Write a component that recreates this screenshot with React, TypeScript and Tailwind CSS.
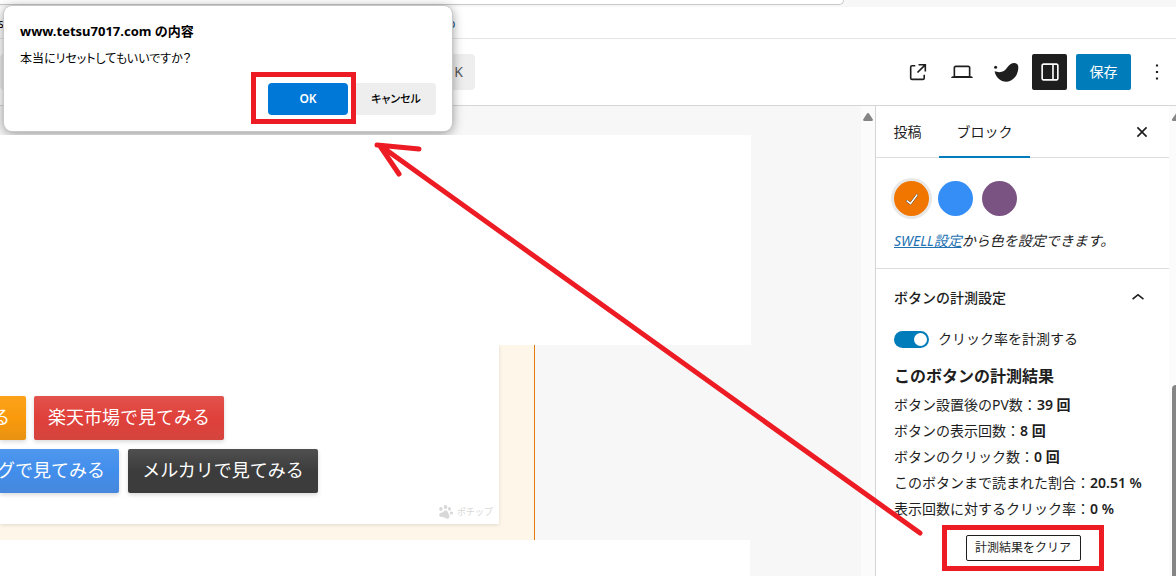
import React from "react";
import clsx from "clsx";

const stats = [
  { label: "ボタン設置後のPV数：", value: "39 回" },
  { label: "ボタンの表示回数：", value: "8 回" },
  { label: "ボタンのクリック数：", value: "0 回" },
  { label: "このボタンまで読まれた割合：", value: "20.51 %" },
  { label: "表示回数に対するクリック率：", value: "0 %" },
];

const colors = [
  { name: "オレンジ", className: "bg-[#f07600]", selected: true },
  { name: "ブルー", className: "bg-[#358ef5]", selected: false },
  { name: "パープル", className: "bg-[#7b5383]", selected: false },
];

function Icon({ d, className = "w-[26px] h-[26px]" }: { d: string; className?: string }) {
  return (
    <svg xmlns="http://www.w3.org/2000/svg" viewBox="0 0 24 24" fill="currentColor" className={className}>
      <path d={d} />
    </svg>
  );
}

function ShopButton({ children, className }: { children: React.ReactNode; className: string }) {
  return (
    <a
      href="#"
      className={clsx(
        "flex h-11 shrink-0 items-center whitespace-nowrap bg-linear-to-b pb-1 text-lg leading-6 text-white shadow-[0_2px_4px_rgba(0,0,0,0.15)]",
        className
      )}
    >
      {children}
    </a>
  );
}

function Header() {
  return (
    <header className="flex h-[67px] shrink-0 items-center justify-between border-b border-[#d5d5d5] bg-white pr-0.5">
      <button className="flex h-9 w-[475px] items-center justify-end rounded-sm bg-[#eeeeee] pr-3 text-sm text-[#555]">
        K
      </button>
      <div className="flex items-center gap-[9px] text-[#1e1e1e]">
        <button aria-label="投稿を表示" className="flex h-9 w-[35px] items-center justify-center">
          <Icon d="M19.5 4.5h-7V6h4.44l-5.97 5.97 1.06 1.06L18 7.06v4.44h1.5v-7Zm-13 1a2 2 0 0 0-2 2v10a2 2 0 0 0 2 2h10a2 2 0 0 0 2-2v-3H17v3a.5.5 0 0 1-.5.5h-10a.5.5 0 0 1-.5-.5v-10a.5.5 0 0 1 .5-.5h3V5.5h-3Z" />
        </button>
        <button aria-label="表示" className="flex h-9 w-[35px] items-center justify-center">
          <Icon d="M20.5 16h-.7V8c0-1.1-.9-2-2-2H6.2c-1.1 0-2 .9-2 2v8h-.7c-.8 0-1.5.7-1.5 1.5h20c0-.8-.7-1.5-1.5-1.5zM5.7 8c0-.3.2-.5.5-.5h11.6c.3 0 .5.2.5.5v7.6H5.7V8z" />
        </button>
        <button aria-label="SWELL" className="flex h-9 w-[35px] items-center justify-center">
          <svg viewBox="0 0 26 20" fill="currentColor" className="h-5 w-[26px]">
            <circle cx="2.6" cy="5.3" r="1.5" />
            <path d="M1.600 9.300c1.600.1 2.800 1 4.800 1 3.400 0 5.800-1.900 7.800-4.700C16.200 2.800 18.200.9 21.400.9c2.500 0 3.900 1.800 3.900 4.700 0 4-1.500 7.600-4.100 10.400-2.300 2.400-5 3.700-8 3.700C7.600 19.700 2.700 15.500 1.600 9.300z" />
          </svg>
        </button>
        <button aria-label="設定" className="flex h-9 w-[35px] items-center justify-center rounded-xs bg-[#1e1e1e] text-white">
          <Icon d="M18 4H6c-1.1 0-2 .9-2 2v12c0 1.1.9 2 2 2h12c1.1 0 2-.9 2-2V6c0-1.1-.9-2-2-2zm-4 14.5H6c-.3 0-.5-.2-.5-.5V6c0-.3.2-.5.5-.5h8v13zm4.5-.5c0 .3-.2.5-.5.5h-2.5v-13H18c.3 0 .5.2.5.5v12z" />
        </button>
        <button className="flex h-9 w-[55px] items-center justify-center rounded-xs bg-[#007cba] text-sm text-white">
          保存
        </button>
        <button aria-label="オプション" className="flex h-9 w-[34px] items-center justify-center">
          <Icon d="M13 19h-2v-2h2v2zm0-6h-2v-2h2v2zm0-6h-2V5h2v2z" />
        </button>
      </div>
    </header>
  );
}

function Canvas() {
  return (
    <main className="flex min-w-0 flex-1 flex-col overflow-hidden bg-[#f7f7f7] pt-[29px] [font-family:'Noto_Sans_CJK_JP',sans-serif]">
      <div className="relative z-20 mr-[110px] h-[210px] shrink-0 bg-white" />
      <div className="mr-[326px] h-[195px] shrink-0 border-r border-r-[#e57a10] bg-[#fff6ea] pr-[35px]">
        <div className="flex h-[179px] flex-col bg-white pt-[51px] shadow-[0_1px_4px_rgba(0,0,0,0.12)]">
          <div className="flex gap-2">
            <ShopButton className="w-[26px] justify-end rounded-r-xs from-[#fba21a] via-[#fa9a0b] to-[#e89212] pr-4">
              る
            </ShopButton>
            <ShopButton className="w-[190px] justify-center rounded-xs from-[#e2524c] via-[#e0403a] to-[#d5443e]">
              楽天市場で見てみる
            </ShopButton>
          </div>
          <div className="mt-[9px] flex gap-[9px]">
            <ShopButton className="w-[119px] justify-end rounded-r-xs from-[#4f98ee] via-[#428eec] to-[#4688dc] pr-3.5">
              グで見てみる
            </ShopButton>
            <ShopButton className="w-[190px] justify-center rounded-xs from-[#505050] via-[#3c3c3c] to-[#3c3c3c]">
              メルカリで見てみる
            </ShopButton>
          </div>
          <div className="mt-[11px] flex items-center justify-end gap-1 pr-1.5 text-[#d8d8d8]">
            <svg viewBox="0 0 14 14" fill="currentColor" className="h-3.5 w-3.5">
              <ellipse cx="1.9" cy="4" rx="1.7" ry="1.9" />
              <ellipse cx="6.5" cy="2" rx="1.8" ry="2" />
              <ellipse cx="10.5" cy="3.8" rx="1.5" ry="1.9" />
              <ellipse cx="12.4" cy="8" rx="1.6" ry="1.5" />
              <path d="M6.5 5.5C9 5.5 8.8 7.6 9.8 9c1.1 1.6.9 4.5-1.3 4.7-1.6.1-2.3-1.5-4.3-1.5C1.8 12.2-.3 11.5.3 9.3.9 7.5 3.9 8 4.300 7.100 4.700 6.100 5.200 5.500 6.500 5.500z" />
            </svg>
            <span className="text-[9px] leading-4">ポチップ</span>
          </div>
        </div>
      </div>
      <div className="mr-[111px] flex-1 bg-white" />
    </main>
  );
}

function Sidebar() {
  return (
    <aside className="w-[294px] shrink-0 border-l border-[#d5d5d5] bg-white text-sm text-[#1e1e1e]">
      <div className="flex h-[52px] items-stretch border-b border-[#dddddd]">
        <button className="w-[63px]">投稿</button>
        <button className="-mb-px w-[91px] border-b-2 border-[#007cba] pt-0.5">ブロック</button>
        <button aria-label="設定を閉じる" className="mr-3.5 ml-auto">
          <Icon d="M12 13.06l3.712 3.713 1.061-1.06L13.061 12l3.712-3.712-1.06-1.06L12 10.938 8.288 7.227l-1.061 1.06L10.939 12l-3.712 3.712 1.06 1.061L12 13.061z" />
        </button>
      </div>

      {/* Colour */}
      <section className="h-[111px] border-b border-[#dddddd] px-[18px] pt-[23px]">
        <div className="flex gap-[9px]">
          {colors.map((c) => (
            <button
              key={c.name}
              aria-label={c.name}
              className={clsx(
                "flex h-[35px] w-[35px] items-center justify-center rounded-full text-white",
                c.className,
                c.selected && "ring-3 ring-[#e8e8e8]"
              )}
            >
              {c.selected && (
                <svg viewBox="0 0 24 24" className="h-6 w-6 fill-white stroke-[#333] stroke-1 [paint-order:stroke]">
                  <path d="M16.7 7.1l-6.3 8.5-3.3-2.5-.9 1.2 4.5 3.4L17.9 8z" />
                </svg>
              )}
            </button>
          ))}
        </div>
        <p className="mt-[15px] leading-5 whitespace-nowrap italic">
          <a href="#" className="text-[#2271b1] underline">SWELL設定</a>から色を設定できます。
        </p>
      </section>

      {/* Click tracking */}
      <section className="px-[18px] pt-4">
        <button className="flex w-full items-center justify-between font-medium">
          ボタンの計測設定
          <Icon d="M6.5 12.4L12 8l5.5 4.4-.9 1.2L12 10l-4.5 3.6-1-1.2z" />
        </button>
        <label className="mt-[18px] flex items-center gap-[9px] leading-5">
          <span className="relative flex">
            <input
              type="checkbox"
              defaultChecked
              className="peer h-[17px] w-[35px] appearance-none rounded-full bg-[#949494] checked:bg-[#007cba]"
            />
            <span className="pointer-events-none absolute top-0.5 right-0.5 h-[13px] w-[13px] rounded-full bg-white" />
          </span>
          クリック率を計測する
        </label>
        <h3 className="mt-[15px] text-base leading-6 font-bold">このボタンの計測結果</h3>
        <div className="mt-1">
          {stats.map((s) => (
            <p key={s.label} className="leading-[26px] whitespace-nowrap">
              {s.label}
              <strong className="font-semibold">{s.value}</strong>
            </p>
          ))}
        </div>
      </section>
      <div className="mt-[3px] mr-[65px] ml-[66px] flex h-[46px] items-center justify-center border-5 border-[#ed1c24]">
        <button className="h-[26px] w-[115px] rounded-xs border border-[#1e1e1e] text-xs">計測結果をクリア</button>
      </div>
    </aside>
  );
}

function ConfirmDialog() {
  return (
    <div
      role="dialog"
      aria-label="www.tetsu7017.com の内容"
      className="absolute top-1.5 left-1 z-10 h-[125px] w-[448px] rounded-lg bg-white px-4 pt-[15px] text-black shadow-[0_0_0_1px_#c8c8c8,0_2px_12px_rgba(0,0,0,0.45)] [font-feature-settings:'palt']"
    >
      <h2 className="text-[13px] leading-5 font-bold">www.tetsu7017.com の内容</h2>
      <p className="mt-2 text-xs leading-5">本当にリセットしてもいいですか？</p>
      <div className="mt-[3px] flex items-center justify-end">
        <div className="flex h-[52px] w-[105px] items-center justify-end border-5 border-[#ed1c24] pr-[3px]">
          <button className="mt-0.5 h-8 w-20 rounded-sm bg-[#0078d7] text-xs font-semibold text-white">OK</button>
        </div>
        <button className="mt-0.5 h-8 w-20 rounded-r-sm bg-[#eeeeee] text-[11px] font-medium">キャンセル</button>
      </div>
    </div>
  );
}

export default function App() {
  return (
    <div className="relative flex h-screen flex-col overflow-hidden bg-white [font-family:'Noto_Sans','Noto_Sans_CJK_JP',sans-serif]">
      {/* Browser chrome */}
      <div className="h-[7px] shrink-0 bg-[#f7f7f7]">
        <div className="mr-[332px] h-[5px] rounded-br-lg border-r border-b border-[#c8c8c8] bg-white" />
      </div>
      <nav className="flex h-8 shrink-0 items-center border-b border-[#e5e5e5] pt-0.5 text-xs">
        <span className="-ml-0.5 w-1 text-black">s</span>
        <a href="#" className="ml-[446px] text-[#14507d]">p</a>
      </nav>
      <Header />
      <div className="flex min-h-0 flex-1">
        <Canvas />
        <div className="flex w-3.5 shrink-0 justify-center bg-[#fbfbfb] pt-[7px]">
          <svg viewBox="0 0 10 8" className="h-2 w-2.5 fill-[#858585]">
            <path d="M4 .6a1.3 1.3 0 0 1 2 0L9.6 6a1.2 1.2 0 0 1-1 2H1.4a1.2 1.2 0 0 1-1-2z" />
          </svg>
        </div>
        <Sidebar />
        <div className="flex w-[7px] shrink-0 flex-col items-end overflow-hidden bg-[#fbfbfb] pt-[7px]">
          <svg viewBox="0 0 4 8" className="h-2 w-1 fill-[#858585]">
            <path d="M4 .5L.2 6a1.2 1.2 0 0 0 1 2H4z" />
          </svg>
          <div className="mt-66 w-1 flex-1 rounded-tl-sm bg-[#858585]" />
        </div>
      </div>

      <ConfirmDialog />

      {/* Arrow from the clear button to OK */}
      <svg
        viewBox="0 0 1176 576"
        className="pointer-events-none absolute top-0 left-0 z-30 h-[576px] w-[1176px] fill-none stroke-[#ed1c24] stroke-5"
        strokeLinecap="round"
        strokeLinejoin="round"
      >
        <path d="M920 533L385 149M377 145L419 149M380 146L399 174" />
      </svg>
    </div>
  );
}
